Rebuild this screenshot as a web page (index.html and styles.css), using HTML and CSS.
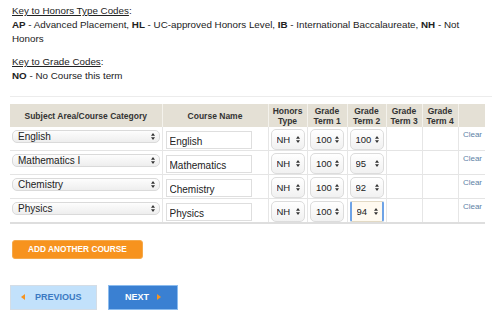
FILE: index.html
```html
<!DOCTYPE html>
<html lang="en">
<head>
  <meta charset="UTF-8">
  <title>Course Entry</title>
  <link rel="stylesheet" href="styles.css">
</head>
<body>

<div class="page">
  <div class="keys">
    <div class="key">
      <div class="key-title"><u>Key to Honors Type Codes</u>:</div>
      <div class="key-text"><b>AP</b> - Advanced Placement, <b>HL</b> - UC-approved Honors Level, <b>IB</b> - International Baccalaureate, <b>NH</b> - Not</div>
      <div class="key-text">Honors</div>
    </div>
    <div class="key">
      <div class="key-title"><u>Key to Grade Codes</u>:</div>
      <div class="key-text"><b>NO</b> - No Course this term</div>
    </div>
  </div>

  <table class="courses">
    <colgroup>
      <col style="width:152px"><col style="width:106px"><col style="width:39px"><col style="width:40px">
      <col style="width:39px"><col style="width:36px"><col style="width:36px"><col style="width:27px">
    </colgroup>
    <thead>
      <tr>
        <th>Subject Area/Course Category</th>
        <th>Course Name</th>
        <th>Honors Type</th>
        <th>Grade Term 1</th>
        <th>Grade Term 2</th>
        <th>Grade Term 3</th>
        <th>Grade Term 4</th>
        <th></th>
      </tr>
    </thead>
    <tbody>
      <tr>
        <td><select class="subject"><option>English</option></select></td>
        <td><input class="name" type="text" value="English"></td>
        <td><select class="code"><option>NH</option></select></td>
        <td><select class="code"><option>100</option></select></td>
        <td><select class="code"><option>100</option></select></td>
        <td></td><td></td>
        <td class="clear"><a href="#">Clear</a></td>
      </tr>
      <tr>
        <td><select class="subject"><option>Mathematics I</option></select></td>
        <td><input class="name" type="text" value="Mathematics"></td>
        <td><select class="code"><option>NH</option></select></td>
        <td><select class="code"><option>100</option></select></td>
        <td><select class="code"><option>95</option></select></td>
        <td></td><td></td>
        <td class="clear"><a href="#">Clear</a></td>
      </tr>
      <tr>
        <td><select class="subject"><option>Chemistry</option></select></td>
        <td><input class="name" type="text" value="Chemistry"></td>
        <td><select class="code"><option>NH</option></select></td>
        <td><select class="code"><option>100</option></select></td>
        <td><select class="code"><option>92</option></select></td>
        <td></td><td></td>
        <td class="clear"><a href="#">Clear</a></td>
      </tr>
      <tr>
        <td><select class="subject"><option>Physics</option></select></td>
        <td><input class="name" type="text" value="Physics"></td>
        <td><select class="code"><option>NH</option></select></td>
        <td><select class="code"><option>100</option></select></td>
        <td><select class="code active"><option>94</option></select></td>
        <td></td><td></td>
        <td class="clear"><a href="#">Clear</a></td>
      </tr>
    </tbody>
  </table>

  <div class="add-row">
    <button class="btn-add">Add another course</button>
  </div>

  <div class="nav">
    <button class="btn-prev"><span class="tri-left"></span>Previous</button>
    <button class="btn-next">Next<span class="tri-right"></span></button>
  </div>
</div>

</body>
</html>
```

FILE: styles.css
```css
body { margin: 0; background: #fff; font-family: "Liberation Sans", Arial, sans-serif; color: #222; }
.page { padding: 4px 8px 0 10px; width: 482px; }

.keys { padding: 0 0 13px 2px; border-bottom: 1px solid #ececec; }
.key { margin: 0 0 9px; font-size: 9.8px; line-height: 14px; }
.key:last-child { margin-bottom: 0; }
.key-text { white-space: nowrap; }

.courses { width: 475px; border-collapse: collapse; table-layout: fixed; margin-top: 7px; border-bottom: 2px solid #dedede; }
.courses th { background: #e4e0d5; font-size: 8.5px; font-weight: bold; color: #333; height: 23px; padding: 0 2px; line-height: 10px; border-left: 1px solid #f4f2ec; }
.courses th:first-child { border-left: 0; }
.courses td { height: 23px; padding: 0; border-top: 1px solid #e4e4e4; border-left: 1px solid #e6e6e6; vertical-align: top; }
.courses td:first-child { border-left: 0; }
.courses tbody tr:first-child td { border-top: 0; }

select { -webkit-appearance: none; appearance: none; font-family: "Liberation Sans", Arial, sans-serif; color: #222; margin: 0; }
select.subject { display: block; width: 148px; height: 13px; margin: 3px 0 0 2px; padding: 0 0 0 5px; font-size: 10px; line-height: 11px;
  border: 1px solid #dadada; border-radius: 5px;
  background: url("data:image/svg+xml,%3Csvg xmlns='http://www.w3.org/2000/svg' width='4' height='7'%3E%3Cpath d='M2 0L4 2.7H0z M2 7L4 4.3H0z' fill='%23333'/%3E%3C/svg%3E") no-repeat right 4px center, linear-gradient(#fdfdfd, #eeeeee); }
select.code { display: block; width: 34px; height: 21px; margin: 2px auto 0; padding: 0 0 0 5px; font-size: 9.5px;
  border: 1px solid #dcdcdc; border-radius: 5px;
  background: url("data:image/svg+xml,%3Csvg xmlns='http://www.w3.org/2000/svg' width='4' height='7'%3E%3Cpath d='M2 0L4 2.7H0z M2 7L4 4.3H0z' fill='%23333'/%3E%3C/svg%3E") no-repeat right 4px center, linear-gradient(#ffffff, #f1f1f1); }
select.code.active { border: 1px solid #e2d9c4; border-left: 2px solid #6ea3e6; border-right: 2px solid #6ea3e6; border-radius: 2px;
  background: url("data:image/svg+xml,%3Csvg xmlns='http://www.w3.org/2000/svg' width='4' height='7'%3E%3Cpath d='M2 0L4 2.7H0z M2 7L4 4.3H0z' fill='%23333'/%3E%3C/svg%3E") no-repeat right 4px center, #fffaf0; }

input.name { display: block; width: 86px; height: 18px; box-sizing: border-box; margin: 4px 0 0 3px; padding: 2px 3px 0; font-size: 10px;
  font-family: "Liberation Sans", Arial, sans-serif; color: #222; border: 1px solid #dedede; background: #fff; }

.clear { text-align: right; padding-right: 3px !important; }
.clear a { display: block; font-size: 8px; color: #5d7fa6; text-decoration: none; margin-top: 3px; }

.add-row { margin-top: 14px; padding-left: 2px; }
.btn-add { background: #f7931e; color: #fff; border: 1px solid #f5a94b; border-radius: 3px; height: 19px; width: 131px;
  font-family: "Liberation Sans", Arial, sans-serif; font-weight: bold; font-size: 8.3px; text-transform: uppercase; padding: 0; }

.nav { display: flex; gap: 11px; margin-top: 26px; }
.nav button { height: 25px; border: 1px solid #c8dcf0; font-family: "Liberation Sans", Arial, sans-serif; font-weight: bold; font-size: 9px;
  text-transform: uppercase; padding: 0; display: flex; align-items: center; }
.btn-prev { width: 87px; background: #c2e1fb; color: #3b79c2; border-color: #d4dde6 !important; padding-left: 10px !important; }
.btn-next { width: 70px; background: #3a80d2; color: #fff; border-color: #8cbcee !important; padding-left: 16px !important; }
.tri-left { width: 0; height: 0; border-top: 3px solid transparent; border-bottom: 3px solid transparent; border-right: 4px solid #f7931e; margin-right: 10px; }
.tri-right { width: 0; height: 0; border-top: 3px solid transparent; border-bottom: 3px solid transparent; border-left: 4px solid #f7931e; margin-left: 8px; }
```
